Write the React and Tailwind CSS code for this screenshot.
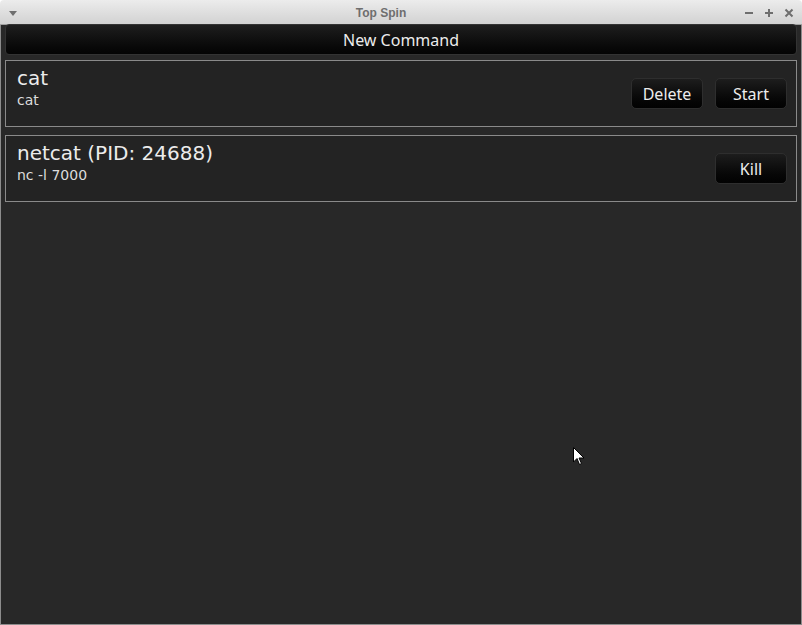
import React from "react";

const font = { fontFamily: "'Noto Sans', 'Open Sans', 'DejaVu Sans', sans-serif" };
const cardFont = { fontFamily: "'DejaVu Sans', 'Noto Sans', sans-serif" };

function ActionButton({ label }) {
  return (
    <button className="w-[72px] h-[31px] rounded-[5px] border border-[#2e2e2e] bg-gradient-to-b from-[#1d1d1d] to-[#020202] text-[16px] text-[#ececec]">
      {label}
    </button>
  );
}

function CommandCard({ title, command, actions }) {
  return (
    <div className="flex items-center justify-between border border-[#8a8a8a] bg-[#232323] h-[67px] pl-[11px] pr-[9px]">
      <div className="flex flex-col -mt-[12px]" style={cardFont}>
        <span className="text-[20px] leading-[24px] text-[#ececec]">{title}</span>
        <span className="text-[14px] leading-[20px] text-[#dcdcdc]">{command}</span>
      </div>
      <div className="flex gap-[12px]">
        {actions.map((a) => (
          <ActionButton key={a} label={a} />
        ))}
      </div>
    </div>
  );
}

export default function App() {
  return (
    <div className="w-[802px] h-[625px] flex flex-col relative overflow-hidden" style={font}>
      {/* Title bar */}
      <div className="h-[25px] flex items-center justify-between px-[8px] pt-[2px] rounded-t-[4px] bg-gradient-to-b from-[#ececec] to-[#d2d2d2] border-b border-[#a0a0a0]">
        <svg width="10" height="8" viewBox="0 0 10 8">
          <path d="M1 2 L9 2 L5 7 Z" fill="#6e6e6e" />
        </svg>
        <span className="text-[12px] font-bold text-[#6e6e6e]" style={{ fontFamily: "'Liberation Sans', sans-serif" }}>
          Top Spin
        </span>
        <div className="flex items-center gap-[10px] text-[#6e6e6e]">
          <svg width="10" height="10" viewBox="0 0 10 10">
            <path d="M1 5 H9" stroke="#6e6e6e" strokeWidth="2" />
          </svg>
          <svg width="10" height="10" viewBox="0 0 10 10">
            <path d="M1 5 H9 M5 1 V9" stroke="#6e6e6e" strokeWidth="2" />
          </svg>
          <svg width="10" height="10" viewBox="0 0 10 10">
            <path d="M1.5 1.5 L8.5 8.5 M8.5 1.5 L1.5 8.5" stroke="#6e6e6e" strokeWidth="2" />
          </svg>
        </div>
      </div>

      {/* Body */}
      <div className="flex-1 bg-[#282828] border-x border-b border-[#8c8c8c] flex flex-col px-[4px]">
        <button className="-mt-[1px] h-[31px] rounded-[4px] border border-[#333] bg-gradient-to-b from-[#1e1e1e] to-[#040404] text-[16px] text-[#ececec]">
          New Command
        </button>
        <div className="flex flex-col gap-[8px] mt-[5px]">
          <CommandCard title="cat" command="cat" actions={["Delete", "Start"]} />
          <CommandCard title="netcat (PID: 24688)" command="nc -l 7000" actions={["Kill"]} />
        </div>
      </div>

      {/* Mouse pointer */}
      <svg className="absolute left-[573px] top-[447px]" width="12" height="19" viewBox="0 0 12 19">
        <path d="M0.5 0.5 L0.5 15 L4 11.5 L6.5 17.5 L8.5 16.5 L6 11 L11 11 Z" fill="#fff" stroke="#000" strokeWidth="1" />
      </svg>
    </div>
  );
}
